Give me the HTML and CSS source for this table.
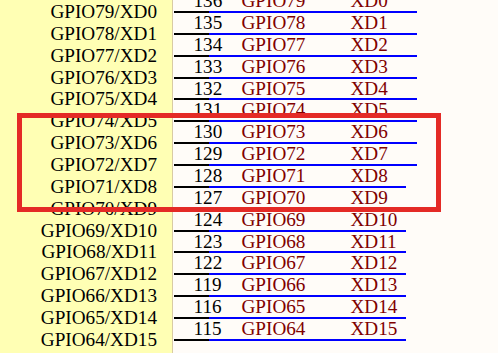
FILE: index.html
```html
<!DOCTYPE html>
<html>
<head>
<meta charset="utf-8">
<link rel="stylesheet" href="styles.css">
</head>
<body>
<div class="sheet">
  <div class="labels">
    <div class="label">GPIO79/XD0</div>
    <div class="label">GPIO78/XD1</div>
    <div class="label">GPIO77/XD2</div>
    <div class="label">GPIO76/XD3</div>
    <div class="label">GPIO75/XD4</div>
    <div class="label">GPIO74/XD5</div>
    <div class="label">GPIO73/XD6</div>
    <div class="label">GPIO72/XD7</div>
    <div class="label">GPIO71/XD8</div>
    <div class="label">GPIO70/XD9</div>
    <div class="label">GPIO69/XD10</div>
    <div class="label">GPIO68/XD11</div>
    <div class="label">GPIO67/XD12</div>
    <div class="label">GPIO66/XD13</div>
    <div class="label">GPIO65/XD14</div>
    <div class="label">GPIO64/XD15</div>
  </div>
  <div class="pins">
    <div class="pin long"><span class="num">136</span><span class="sig">GPIO79</span><span class="sig">XD0</span></div>
    <div class="pin long"><span class="num">135</span><span class="sig">GPIO78</span><span class="sig">XD1</span></div>
    <div class="pin long"><span class="num">134</span><span class="sig">GPIO77</span><span class="sig">XD2</span></div>
    <div class="pin long"><span class="num">133</span><span class="sig">GPIO76</span><span class="sig">XD3</span></div>
    <div class="pin long"><span class="num">132</span><span class="sig">GPIO75</span><span class="sig">XD4</span></div>
    <div class="pin long"><span class="num">131</span><span class="sig">GPIO74</span><span class="sig">XD5</span></div>
    <div class="pin long"><span class="num">130</span><span class="sig">GPIO73</span><span class="sig">XD6</span></div>
    <div class="pin long"><span class="num">129</span><span class="sig">GPIO72</span><span class="sig">XD7</span></div>
    <div class="pin"><span class="num">128</span><span class="sig">GPIO71</span><span class="sig">XD8</span></div>
    <div class="pin faint"><span class="num">127</span><span class="sig">GPIO70</span><span class="sig">XD9</span></div>
    <div class="pin"><span class="num">124</span><span class="sig">GPIO69</span><span class="sig">XD10</span></div>
    <div class="pin"><span class="num">123</span><span class="sig">GPIO68</span><span class="sig">XD11</span></div>
    <div class="pin"><span class="num">122</span><span class="sig">GPIO67</span><span class="sig">XD12</span></div>
    <div class="pin"><span class="num">119</span><span class="sig">GPIO66</span><span class="sig">XD13</span></div>
    <div class="pin"><span class="num">116</span><span class="sig">GPIO65</span><span class="sig">XD14</span></div>
    <div class="pin"><span class="num">115</span><span class="sig">GPIO64</span><span class="sig">XD15</span></div>
  </div>
  <div class="highlight"></div>
</div>
</body>
</html>
```
FILE: styles.css
```css
html, body {
  margin: 0;
  padding: 0;
  background: #fffcf8;
  overflow: hidden;
}

.sheet {
  position: relative;
  display: grid;
  grid-template-columns: 173px 1fr;
  height: 353px;
  overflow: hidden;
  font-family: "Liberation Serif", "Times New Roman", serif;
  font-size: 19.2px;
}

.labels {
  background: #ffffb4;
  border-right: 1px solid #d9cba4;
  padding: 1px 15px 0 0;
  text-align: right;
  color: #000;
}

.label {
  height: 21.87px;
  line-height: 21.87px;
  white-space: nowrap;
}

.pins {
  margin-top: -8.87px;
  padding-left: 0.5px;
}

.pin {
  box-sizing: border-box;
  width: 243px;
  height: 21.87px;
  line-height: 19.87px;
  padding-left: 20px;
  display: grid;
  grid-template-columns: 48px 109px 1fr;
  white-space: nowrap;
  background:
    linear-gradient(#000, #000) left bottom / 35px 2px no-repeat,
    linear-gradient(#0000ff, #0000ff) left bottom / 100% 2px no-repeat;
}

.pin.long {
  width: 243px;
}

.pin:not(.long) {
  width: 232px;
}

.pin.faint {
  background:
    linear-gradient(#000, #000) left bottom / 35px 2px no-repeat,
    linear-gradient(#a8a8f4, #a8a8f4) left bottom / 100% 2px no-repeat;
}

.num {
  color: #000;
}

.sig {
  color: #800000;
}

.highlight {
  position: absolute;
  left: 17px;
  top: 113px;
  width: 424px;
  height: 99px;
  box-sizing: border-box;
  border: 5px solid #e42a26;
}
```
